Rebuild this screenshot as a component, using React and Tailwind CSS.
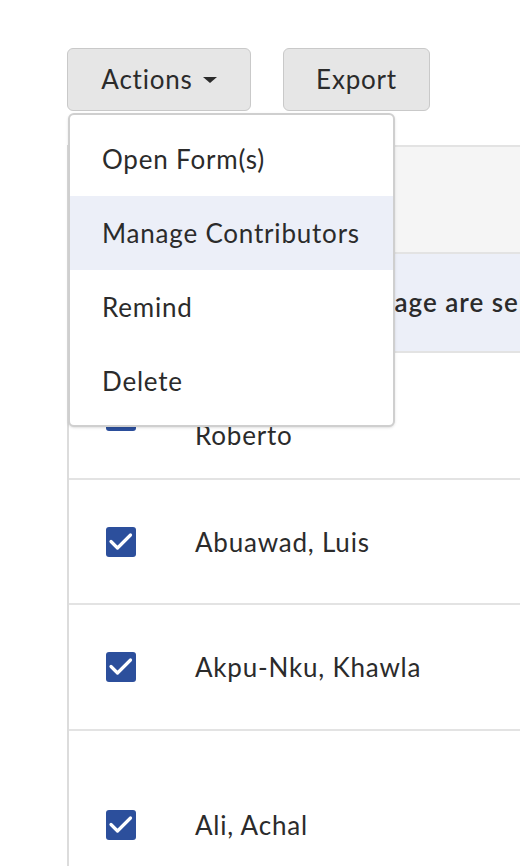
const rows = [
  { name: ['Abu-Hamdan,', 'Roberto'], h: 'h-[127px]', pad: 'pt-[8px]' },
  { name: ['Abuawad, Luis'], h: 'h-[125px]', pad: '' },
  { name: ['Akpu-Nku, Khawla'], h: 'h-[126px]', pad: '' },
  { name: ['Ali, Achal'], h: 'h-[190px]', pad: '' },
];

const menuItems = ['Open Form(s)', 'Manage Contributors', 'Remind', 'Delete'];

function Checkbox() {
  return (
    <div className="w-[30px] h-[30px] rounded-[3px] bg-[#2c4f9c] shrink-0">
      <svg width="30" height="30" viewBox="0 0 30 30" fill="none">
        <path d="M5 14.5 L11.5 21 L24.5 8" stroke="white" strokeWidth="3.2" strokeLinecap="round" strokeLinejoin="round" />
      </svg>
    </div>
  );
}

export default function App() {
  return (
    <div className="relative w-[520px] h-[866px] overflow-hidden bg-white text-[#2b2b2b] font-['Lato',sans-serif] text-[26px] tracking-[0.8px]">
      <div className="pl-[67px] pt-[48px]">
        {/* Toolbar */}
        <div className="flex gap-[32px]">
          <button className="w-[184px] h-[63px] rounded-[6px] bg-[#e6e6e6] border border-[#c9c9c9] flex items-center justify-center gap-[10px]">
            <span>Actions</span>
            <svg width="14" height="6" viewBox="0 0 14 6">
              <path d="M0 0 L14 0 L7 6 Z" fill="#2b2b2b" />
            </svg>
          </button>
          <button className="w-[147px] h-[63px] rounded-[6px] bg-[#e6e6e6] border border-[#c9c9c9] flex items-center justify-center">
            Export
          </button>
        </div>

        {/* Table */}
        <div className="mt-[34px] border-l-2 border-[#dcdcdc] w-[600px]">
          <div className="h-[109px] bg-[#f5f5f5] border-t-2 border-b-2 border-[#e3e3e3]" />
          <div className="h-[99px] bg-[#eceff8] border-b-2 border-[#e3e3e3] flex items-center pl-[137px] font-semibold tracking-[1px] whitespace-nowrap">
            All 10 on this page are selected.
          </div>
          {rows.map((r, i) => (
            <div key={i} className={`${r.h} flex items-center border-b-2 border-[#e3e3e3] pl-[37px]`}>
              <Checkbox />
              <div className={`pl-[59px] leading-[30px] ${r.pad}`}>
                {r.name.map((n) => (
                  <div key={n}>{n}</div>
                ))}
              </div>
            </div>
          ))}
        </div>
      </div>

      {/* Dropdown menu */}
      <div className="absolute left-[68px] top-[113px] w-[327px] bg-white border-2 border-[#cfcfcf] rounded-[6px] py-[7px] shadow-sm">
        {menuItems.map((m) => (
          <div
            key={m}
            className={`h-[74px] flex items-center pl-[32px] ${m === 'Manage Contributors' ? 'bg-[#eceff8]' : ''}`}
          >
            {m}
          </div>
        ))}
      </div>
    </div>
  );
}
